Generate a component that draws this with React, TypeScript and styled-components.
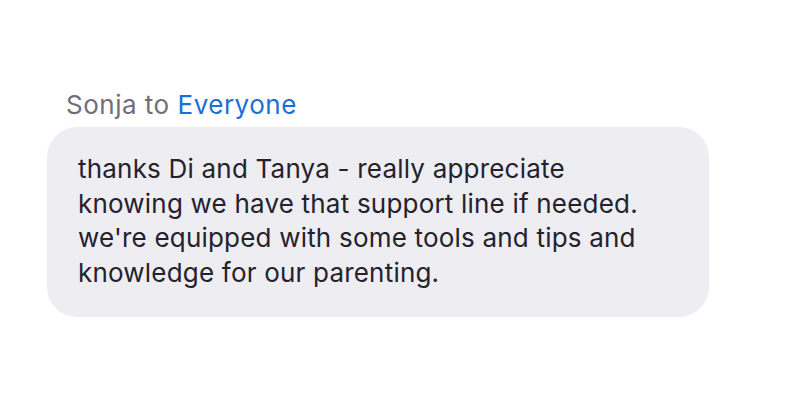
import styled, { createGlobalStyle } from "styled-components";

const GlobalStyle = createGlobalStyle`
  html, body {
    margin: 0;
    padding: 0;
    background: #ffffff;
  }
  body {
    font-family: Inter, "Noto Sans", sans-serif;
  }
`;

const Page = styled.div`
  width: 800px;
  height: 400px;
  box-sizing: border-box;
  padding: 91px 0 0 47px;
`;

const Message = styled.div`
  display: flex;
  flex-direction: column;
  gap: 8px;
`;

const Header = styled.div`
  padding-left: 19px;
  font-size: 26px;
  line-height: 28px;
  letter-spacing: 0.5px;
  color: #6f6e7b;
`;

const Recipient = styled.span`
  color: #1b6fd6;
`;

const Bubble = styled.div`
  width: 662px;
  height: 190px;
  box-sizing: border-box;
  padding: 25px 31px;
  border-radius: 30px;
  background: #eeedf2;
  color: #23222d;
  font-size: 26px;
  line-height: 34.5px;
  letter-spacing: 0.2px;
`;

function App() {
  return (
    <Page>
      <GlobalStyle />
      <Message>
        <Header>
          Sonja to <Recipient>Everyone</Recipient>
        </Header>
        <Bubble>
          thanks Di and Tanya - really appreciate
          <br />
          knowing we have that support line if needed.
          <br />
          we're equipped with some tools and tips and
          <br />
          knowledge for our parenting.
        </Bubble>
      </Message>
    </Page>
  );
}

export default App;
